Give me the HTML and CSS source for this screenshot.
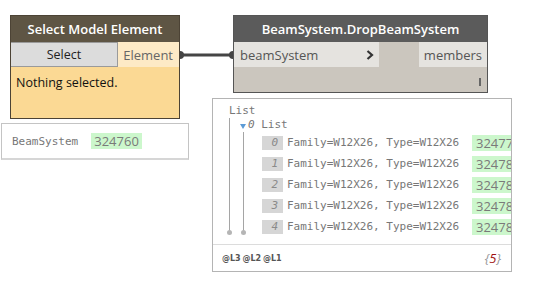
FILE: index.html
```html
<!DOCTYPE html>
<html>
<head>
  <meta charset="utf-8">
  <title>Dynamo Graph</title>
  <link rel="stylesheet" href="styles.css">
</head>
<body>
  <div class="canvas">
    <!-- wire between the two nodes -->
    <svg class="wire" width="60" height="12" viewBox="0 0 60 12">
      <line x1="3" y1="6" x2="56" y2="6" stroke="#454545" stroke-width="3"/>
      <circle cx="3" cy="6" r="4" fill="#454545"/>
      <circle cx="56" cy="6" r="4" fill="#454545"/>
    </svg>

    <div class="node node-select">
      <div class="node-header">Select Model Element</div>
      <div class="port-row">
        <button class="select-btn">Select</button>
        <div class="port port-out-light">Element</div>
      </div>
      <div class="node-body">Nothing selected.</div>
    </div>

    <div class="node node-drop">
      <div class="node-header">BeamSystem.DropBeamSystem</div>
      <div class="port-row">
        <div class="port port-in">
          <span>beamSystem</span>
          <svg width="8" height="10" viewBox="0 0 8 10"><polyline points="1.5,1 6,5 1.5,9" fill="none" stroke="#333" stroke-width="2.2"/></svg>
        </div>
        <div class="port-gap"></div>
        <div class="port port-out">members</div>
      </div>
      <div class="node-body lacing"><span class="lace-mark"></span></div>
    </div>

    <div class="watch watch-small">
      <span class="mono">BeamSystem</span>
      <span class="value">324760</span>
    </div>

    <div class="watch watch-list">
      <div class="tree">
        <div class="mono">List</div>
        <div class="level level-1">
          <div class="mono sub-head"><span class="caret"></span><i>0</i> List</div>
          <div class="level level-2">
            <div class="item"><span class="idx">0</span><span class="mono item-text">Family=W12X26, Type=W12X26</span><span class="value">32477</span></div>
            <div class="item"><span class="idx">1</span><span class="mono item-text">Family=W12X26, Type=W12X26</span><span class="value">32478</span></div>
            <div class="item"><span class="idx">2</span><span class="mono item-text">Family=W12X26, Type=W12X26</span><span class="value">32478</span></div>
            <div class="item"><span class="idx">3</span><span class="mono item-text">Family=W12X26, Type=W12X26</span><span class="value">32478</span></div>
            <div class="item"><span class="idx">4</span><span class="mono item-text">Family=W12X26, Type=W12X26</span><span class="value">32478</span></div>
          </div>
        </div>
      </div>
      <div class="watch-footer">
        <span class="levels">@L3 @L2 @L1</span>
        <span class="count">{<b>5</b>}</span>
      </div>
    </div>
  </div>
</body>
</html>
```

FILE: styles.css
```css
* {
    box-sizing: border-box;
}
body {
    margin: 0;
    background-color: #fff;
    font-family: "Open Sans", "Noto Sans", sans-serif;
}
.canvas {
    position: relative;
    width: 550px;
    height: 282px;
    overflow: hidden;
}
.mono {
    font-family: "DejaVu Sans Mono", monospace;
    font-size: 11px;
    color: #777;
}

/* Wire */
.wire {
    position: absolute;
    left: 177px;
    top: 49px;
}

/* Nodes */
.node {
    position: absolute;
    display: flex;
    flex-direction: column;
    border: 1px solid #4c4335;
}
.node-select {
    left: 10px;
    top: 15px;
    width: 170px;
    height: 104px;
}
.node-drop {
    left: 233px;
    top: 15px;
    width: 255px;
    height: 78px;
    border-color: #555;
}
.node-header {
    height: 26px;
    line-height: 26px;
    text-align: center;
    color: #fff;
    font-size: 13px;
    font-weight: 600;
    background-color: #5e5544;
}
.node-drop .node-header {
    background-color: #5b5b5b;
}
.port-row {
    display: flex;
    height: 25px;
}
.select-btn {
    width: 107px;
    height: 25px;
    margin: 0;
    padding: 0;
    font-family: inherit;
    font-size: 12.5px;
    color: #222;
    background-color: #dcdcdc;
    border: 1px solid #9a9a9a;
    border-left: none;
}
.port {
    display: flex;
    align-items: center;
    font-size: 13px;
    color: #555;
    background-color: #e5e3df;
}
.port-out-light {
    flex: 1;
    justify-content: flex-end;
    padding-right: 6px;
    color: #666;
    background-color: #fdeac6;
}
.port-in {
    width: 145px;
    justify-content: space-between;
    padding: 0 5px 0 6px;
}
.port-gap {
    width: 40px;
    background-color: #cbc6be;
}
.port-out {
    flex: 1;
    justify-content: flex-end;
    padding-right: 5px;
}
.node-body {
    flex: 1;
    padding: 7px 5px;
    font-size: 12.5px;
    color: #111;
    background-color: #fbd994;
}
.lacing {
    display: flex;
    justify-content: flex-end;
    align-items: flex-end;
    padding: 0 6px 6px 0;
    background-color: #cbc6be;
}
.lace-mark {
    width: 2px;
    height: 8px;
    background-color: #666;
}

/* Watch boxes */
.watch {
    position: absolute;
    background-color: #fff;
    border: 1px solid #c4c4c4;
}
.watch-small {
    left: 1px;
    top: 123px;
    width: 188px;
    height: 37px;
    display: flex;
    align-items: center;
    gap: 13px;
    padding-left: 10px;
    border-bottom: 2px solid #d6d6d6;
}
.value {
    display: inline-block;
    height: 16px;
    line-height: 16px;
    padding: 0 3px;
    font-size: 13px;
    color: #7a7a7a;
    background-color: #ccf7cc;
    white-space: nowrap;
}
.watch-list {
    left: 212px;
    top: 98px;
    width: 300px;
    height: 174px;
    display: flex;
    flex-direction: column;
    overflow: hidden;
    border-color: #b4b4b4;
}
.tree {
    flex: 1;
    padding: 5px 0 0 16px;
    line-height: 14px;
}
.level {
    position: relative;
}
.level::before {
    content: "";
    position: absolute;
    left: 0;
    top: 0;
    bottom: 3px;
    border-left: 1px solid #a5a5a5;
}
.level::after {
    content: "";
    position: absolute;
    left: -2px;
    bottom: 2px;
    width: 5px;
    height: 5px;
    border-radius: 50%;
    background-color: #b5b5b5;
}
.level-1 {
    padding-left: 11px;
}
.level-2 {
    margin-left: 3px;
    padding-left: 19px;
}
.sub-head {
    height: 14px;
    display: flex;
    align-items: center;
    white-space: pre;
}
.caret {
    width: 0;
    height: 0;
    margin: 3px 2px 0 0;
    border-left: 3.5px solid transparent;
    border-right: 3.5px solid transparent;
    border-top: 5px solid #5c9bd6;
}
.item {
    display: flex;
    align-items: center;
    height: 21px;
    white-space: nowrap;
}
.idx {
    flex-shrink: 0;
    width: 21px;
    height: 14px;
    line-height: 14px;
    padding-right: 5px;
    margin-right: 4px;
    text-align: right;
    font-family: "DejaVu Sans Mono", monospace;
    font-style: italic;
    font-size: 11px;
    color: #8a8a8a;
    background-color: #d6d6d6;
}
.item-text {
    width: 185px;
    flex-shrink: 0;
}
.item .value {
    flex-shrink: 0;
    padding: 0 4px;
}
.watch-footer {
    height: 27px;
    display: flex;
    align-items: center;
    justify-content: space-between;
    padding: 0 10px 0 9px;
    border-top: 1px solid #dcdcdc;
}
.levels {
    font-family: "DejaVu Sans", sans-serif;
    font-size: 8px;
    font-weight: bold;
    color: #555;
    word-spacing: -1px;
}
.count {
    font-style: italic;
    font-size: 13px;
    color: #999;
}
.count b {
    font-weight: normal;
    color: #a01010;
}
```
